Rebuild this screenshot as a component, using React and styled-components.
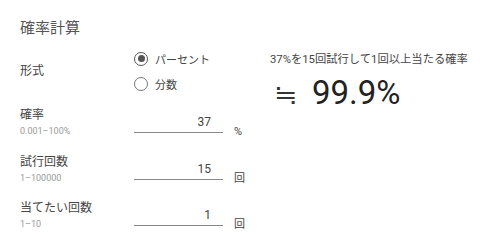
import React, { useState } from 'react';
import styled, { createGlobalStyle } from 'styled-components';

const GlobalStyle = createGlobalStyle`
  html, body {
    margin: 0;
    padding: 0;
    background: #fff;
  }
  body {
    font-family: Roboto, "Noto Sans CJK JP", sans-serif;
    color: #444;
  }
`;

const Page = styled.div`
  display: flex;
  align-items: flex-start;
  padding: 16px 0 0 20px;
  width: 480px;
  height: 234px;
  box-sizing: border-box;
  overflow: hidden;
`;

const Form = styled.div`
  width: 250px;
  flex-shrink: 0;
  display: flex;
  flex-direction: column;
`;

const Title = styled.div`
  font-size: 15px;
  line-height: 24px;
  color: #555;
  margin-bottom: 5px;
`;

const Row = styled.div`
  display: flex;
  flex-shrink: 0;
  align-items: ${p => (p.center ? 'center' : 'flex-start')};
  height: ${p => p.h || 46.5}px;
  margin-top: ${p => p.mt || 0}px;
`;

const LabelBox = styled.div`
  width: 114px;
  display: flex;
  flex-direction: column;
`;

const Label = styled.div`
  font-size: 12px;
  line-height: 18px;
  color: #444;
`;

const Hint = styled.div`
  font-size: 9px;
  line-height: 14px;
  color: #999;
`;

const RadioGroup = styled.div`
  display: flex;
  flex-direction: column;
`;

const RadioOption = styled.label`
  display: flex;
  align-items: center;
  height: 25px;
  font-size: 11px;
  color: #444;
  cursor: pointer;
`;

const RadioCircle = styled.span`
  width: 14px;
  height: 14px;
  box-sizing: border-box;
  border-radius: 50%;
  border: 1.5px solid ${p => (p.checked ? '#555' : '#777')};
  display: flex;
  align-items: center;
  justify-content: center;
  margin-right: 7px;

  &::after {
    content: '';
    width: 7px;
    height: 7px;
    border-radius: 50%;
    background: #555;
    display: ${p => (p.checked ? 'block' : 'none')};
  }
`;

const Input = styled.input`
  width: 89px;
  height: 27px;
  box-sizing: border-box;
  border: none;
  border-bottom: 1px solid #888;
  padding: 6px 12px 0 0;
  text-align: right;
  font-family: Roboto, "Noto Sans CJK JP", sans-serif;
  font-size: 12px;
  color: #444;
  outline: none;
  background: transparent;
`;

const Unit = styled.span`
  margin-left: 11px;
  margin-top: 18px;
  font-size: 11px;
  line-height: 16px;
  color: #444;
`;

const Result = styled.div`
  padding-top: 36px;
  display: flex;
  flex-direction: column;
`;

const Caption = styled.div`
  font-size: 11.3px;
  line-height: 16px;
  color: #444;
`;

const Big = styled.div`
  font-size: 33px;
  line-height: 40px;
  color: #222;
  margin-top: 4px;
  padding-left: 4px;
  white-space: nowrap;
`;

const Approx = styled.span`
  font-family: "Noto Sans CJK JP", sans-serif;
  font-size: 28px;
  color: #333;
  margin-right: 15px;
`;

export default function App() {
  const [mode, setMode] = useState('percent');
  const [rate, setRate] = useState('37');
  const [trials, setTrials] = useState('15');
  const [hits, setHits] = useState('1');

  return (
    <>
      <GlobalStyle />
      <Page>
        <Form>
          <Title>確率計算</Title>
          <Row center h={52}>
            <LabelBox>
              <Label>形式</Label>
            </LabelBox>
            <RadioGroup>
              <RadioOption onClick={() => setMode('percent')}>
                <RadioCircle checked={mode === 'percent'} />
                パーセント
              </RadioOption>
              <RadioOption onClick={() => setMode('fraction')}>
                <RadioCircle checked={mode === 'fraction'} />
                分数
              </RadioOption>
            </RadioGroup>
          </Row>
          <Row mt={9}>
            <LabelBox>
              <Label>確率</Label>
              <Hint>0.001–100%</Hint>
            </LabelBox>
            <Input value={rate} onChange={e => setRate(e.target.value)} />
            <Unit>%</Unit>
          </Row>
          <Row>
            <LabelBox>
              <Label>試行回数</Label>
              <Hint>1–100000</Hint>
            </LabelBox>
            <Input value={trials} onChange={e => setTrials(e.target.value)} />
            <Unit>回</Unit>
          </Row>
          <Row>
            <LabelBox>
              <Label>当てたい回数</Label>
              <Hint>1–10</Hint>
            </LabelBox>
            <Input value={hits} onChange={e => setHits(e.target.value)} />
            <Unit>回</Unit>
          </Row>
        </Form>
        <Result>
          <Caption>37%を15回試行して1回以上当たる確率</Caption>
          <Big>
            <Approx>≒</Approx>99.9%
          </Big>
        </Result>
      </Page>
    </>
  );
}
